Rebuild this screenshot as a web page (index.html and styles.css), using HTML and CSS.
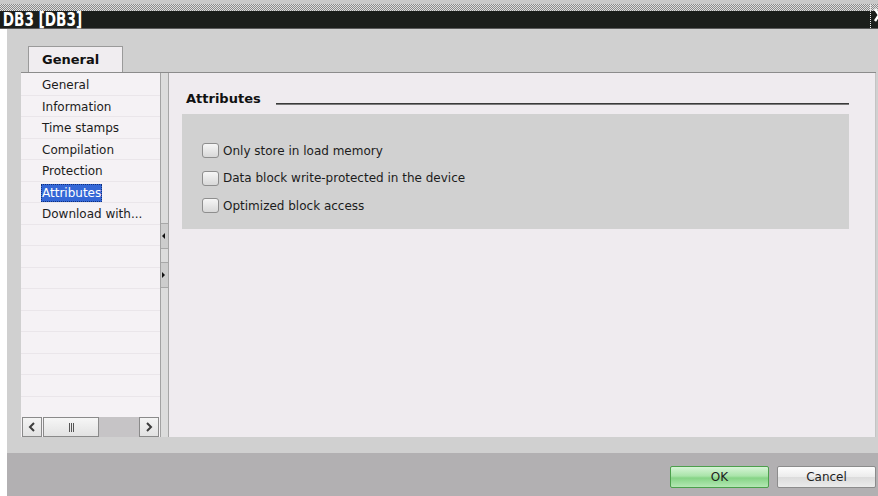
FILE: index.html
```html
<!DOCTYPE html>
<html lang="en">
<head>
<meta charset="utf-8">
<title>DB3 [DB3]</title>
<link rel="stylesheet" href="styles.css">
</head>
<body>
<div class="window">
  <header class="titlebar">
    <div class="grip"></div>
    <div class="caption">
      <span class="caption-text">DB3 [DB3]</span>
      <span class="close">
        <svg class="close-icon" width="12" height="14" viewBox="0 0 12 14">
          <path d="M2 1 L10 13 M10 1 L2 13" stroke="#ffffff" stroke-width="2.4" fill="none"/>
        </svg>
      </span>
    </div>
  </header>

  <div class="dialog">
    <div class="gutter"></div>
    <div class="frame">
      <div class="body">
        <div class="tabs">
          <div class="tab">General</div>
        </div>

        <div class="panels">
          <nav class="nav">
            <ul class="nav-list">
              <li class="nav-item"><span class="nav-label">General</span></li>
              <li class="nav-item"><span class="nav-label">Information</span></li>
              <li class="nav-item"><span class="nav-label">Time stamps</span></li>
              <li class="nav-item"><span class="nav-label">Compilation</span></li>
              <li class="nav-item"><span class="nav-label">Protection</span></li>
              <li class="nav-item"><span class="nav-label is-selected">Attributes</span></li>
              <li class="nav-item"><span class="nav-label">Download with...</span></li>
              <li class="nav-item"></li>
              <li class="nav-item"></li>
              <li class="nav-item"></li>
              <li class="nav-item"></li>
              <li class="nav-item"></li>
              <li class="nav-item"></li>
              <li class="nav-item"></li>
              <li class="nav-item"></li>
              <li class="nav-item"></li>
            </ul>
            <div class="hscroll">
              <span class="hs-btn"><svg width="8" height="10" viewBox="0 0 8 10"><path d="M6 1 L2 5 L6 9" fill="none" stroke="#3c3c3c" stroke-width="2"/></svg></span>
              <span class="hs-thumb"><span class="grip-lines"></span></span>
              <span class="hs-track"></span>
              <span class="hs-btn"><svg width="8" height="10" viewBox="0 0 8 10"><path d="M2 1 L6 5 L2 9" fill="none" stroke="#3c3c3c" stroke-width="2"/></svg></span>
            </div>
          </nav>

          <div class="splitter">
            <span class="split-btn"><span class="arrow-left"></span></span>
            <span class="split-btn"><span class="arrow-right"></span></span>
          </div>

          <section class="content">
            <div class="heading">
              <span class="heading-text">Attributes</span>
              <span class="heading-rule"></span>
            </div>
            <div class="group">
              <label class="option"><span class="check"></span><span>Only store in load memory</span></label>
              <label class="option"><span class="check"></span><span>Data block write-protected in the device</span></label>
              <label class="option"><span class="check"></span><span>Optimized block access</span></label>
            </div>
          </section>
        </div>
      </div>

      <footer class="footer">
        <button class="btn btn-ok">OK</button>
        <button class="btn">Cancel</button>
      </footer>
    </div>
  </div>
</div>
</body>
</html>
```

FILE: styles.css
```css
* {
  box-sizing: border-box;
}

html,
body {
  margin: 0;
  padding: 0;
}

body {
  width: 878px;
  height: 496px;
  overflow: hidden;
  background: #ffffff;
  font-family: "DejaVu Sans", "Liberation Sans", sans-serif;
  font-size: 12px;
  color: #1c1c1c;
}

.window {
  display: flex;
  flex-direction: column;
  height: 496px;
}

/* ---------- title bar ---------- */
.titlebar {
  height: 29px;
  display: flex;
  flex-direction: column;
  background: #1b1e1b;
}

.grip {
  height: 11px;
  background:
    linear-gradient(#c8c8c8 0 4px, transparent 4px),
    repeating-conic-gradient(#8a8a8a 0 25%, #dedede 0 50%) 0 0 / 2px 2px;
}

.caption {
  height: 18px;
  display: flex;
  justify-content: space-between;
  border-bottom: 1px solid #5a5a5a;
}

.caption-text {
  display: inline-block;
  padding-left: 4px;
  font-size: 20px;
  font-weight: bold;
  line-height: 17px;
  color: #ffffff;
  white-space: nowrap;
  transform: scaleX(0.68);
  transform-origin: left center;
}

/* close button, mostly clipped by the window edge */
.close {
  width: 8px;
  overflow: hidden;
  border-left: 1px dotted #e8e8e8;
  margin-top: -6px;
  padding: 3px 0 0 2px;
}

.close-icon {
  display: block;
}

/* ---------- dialog ---------- */
.dialog {
  flex: 1;
  display: flex;
}

.gutter {
  width: 7px;
  background: #ffffff;
}

.frame {
  flex: 1;
  display: flex;
  flex-direction: column;
}

.body {
  height: 424px;
  background: #d0d0d0;
  padding: 17px 2px 16px 14px;
  display: flex;
  flex-direction: column;
}

.tabs {
  height: 26px;
  display: flex;
  padding-left: 7px;
}

.tab {
  width: 95px;
  height: 26px;
  border: 1px solid #9a9a9a;
  border-bottom: none;
  background: #f0edf0;
  font-weight: bold;
  font-size: 13px;
  line-height: 26px;
  padding-left: 13px;
  color: #111111;
}

.panels {
  height: 365px;
  display: flex;
  border-top: 1px solid #8c8c8c;
}

/* ---------- navigation list ---------- */
.nav {
  width: 139px;
  display: flex;
  flex-direction: column;
  background: #f5f2f5;
}

.nav-list {
  flex: 1;
  margin: 0;
  padding: 1px 0 0;
  list-style: none;
  overflow: hidden;
}

.nav-item {
  height: 21.5px;
  display: flex;
  align-items: center;
  padding: 2px 0 0 20px;
  border-bottom: 1px solid #eae6ea;
  white-space: nowrap;
}

.nav-label {
  display: inline-block;
  padding: 0 1px;
  line-height: 18px;
}

.nav-label.is-selected {
  background: #3467d6;
  color: #ffffff;
  outline: 1px dotted #10307c;
  outline-offset: -1px;
}

.hscroll {
  height: 20px;
  display: flex;
  padding: 0 1px;
}

.hs-btn {
  width: 20px;
  height: 20px;
  border: 1px solid #8a8a8a;
  background: linear-gradient(#f4f4f4, #e2e2e2);
  display: flex;
  align-items: center;
  justify-content: center;
}

.hs-thumb {
  width: 56px;
  margin-left: 1px;
  border: 1px solid #8a8a8a;
  background: linear-gradient(#f6f6f6, #e2e2e2);
  display: flex;
  align-items: center;
  justify-content: center;
}

.grip-lines {
  width: 5px;
  height: 9px;
  border-left: 1px solid #555;
  border-right: 1px solid #555;
  position: relative;
}

.grip-lines::after {
  content: "";
  position: absolute;
  left: 1px;
  top: 0;
  width: 1px;
  height: 9px;
  background: #555;
}

.hs-track {
  flex: 1;
  background: #c6c4c6;
}

/* ---------- splitter ---------- */
.splitter {
  width: 9px;
  border-left: 1px solid #a2a2a2;
  border-right: 1px solid #a6a6a6;
  background: #dcdcdc;
  display: flex;
  flex-direction: column;
  gap: 13px;
  padding-top: 150px;
}

.split-btn {
  height: 26px;
  border-top: 1px solid #a8a8a8;
  border-bottom: 1px solid #a8a8a8;
  background: #cdcdcd;
  display: flex;
  align-items: center;
  padding-left: 1px;
}

.arrow-left {
  width: 0;
  height: 0;
  border-top: 3px solid transparent;
  border-bottom: 3px solid transparent;
  border-right: 3px solid #111111;
}

.arrow-right {
  width: 0;
  height: 0;
  border-top: 3px solid transparent;
  border-bottom: 3px solid transparent;
  border-left: 3px solid #111111;
}

/* ---------- content ---------- */
.content {
  flex: 1;
  background: #efebef;
  border-right: 1px solid #c4c4c4;
  padding: 17px 26px 0 13px;
}

.heading {
  display: flex;
  align-items: flex-end;
  padding-left: 4px;
}

.heading-text {
  font-weight: bold;
  font-size: 13px;
  line-height: 17px;
  color: #111111;
}

.heading-rule {
  flex: 1;
  margin: 0 0 2px 15px;
  height: 2px;
  border-top: 1px solid #3a3a3a;
  border-bottom: 1px solid #7a7a7a;
}

.group {
  margin-top: 7px;
  height: 115px;
  background: #d1d1d1;
  padding: 23px 20px 0;
}

.option {
  height: 27.5px;
  display: flex;
  align-items: center;
  gap: 4px;
  white-space: nowrap;
}

.check {
  width: 17px;
  height: 15px;
  border: 1px solid #8e8e8e;
  border-radius: 3px;
  background: linear-gradient(#f6f6f6, #d8d8d8);
}

/* ---------- footer ---------- */
.footer {
  flex: 1;
  background: #b2b0b2;
  display: flex;
  justify-content: flex-end;
  align-items: flex-start;
  gap: 8px;
  padding: 13px 2px 0 0;
}

.btn {
  width: 99px;
  height: 22px;
  padding: 0;
  font-family: "DejaVu Sans", "Liberation Sans", sans-serif;
  font-size: 12px;
  color: #1e1e1e;
  border: 1px solid #8c8c8c;
  border-radius: 2px;
  background: linear-gradient(#fdfdfd, #ececec 48%, #dcdcdc 52%, #ebebeb);
}

.btn-ok {
  border-color: #4c9f4c;
  background: linear-gradient(#d6f4d6, #a9e4a9 45%, #86d486 55%, #b4e8b4);
}
```
